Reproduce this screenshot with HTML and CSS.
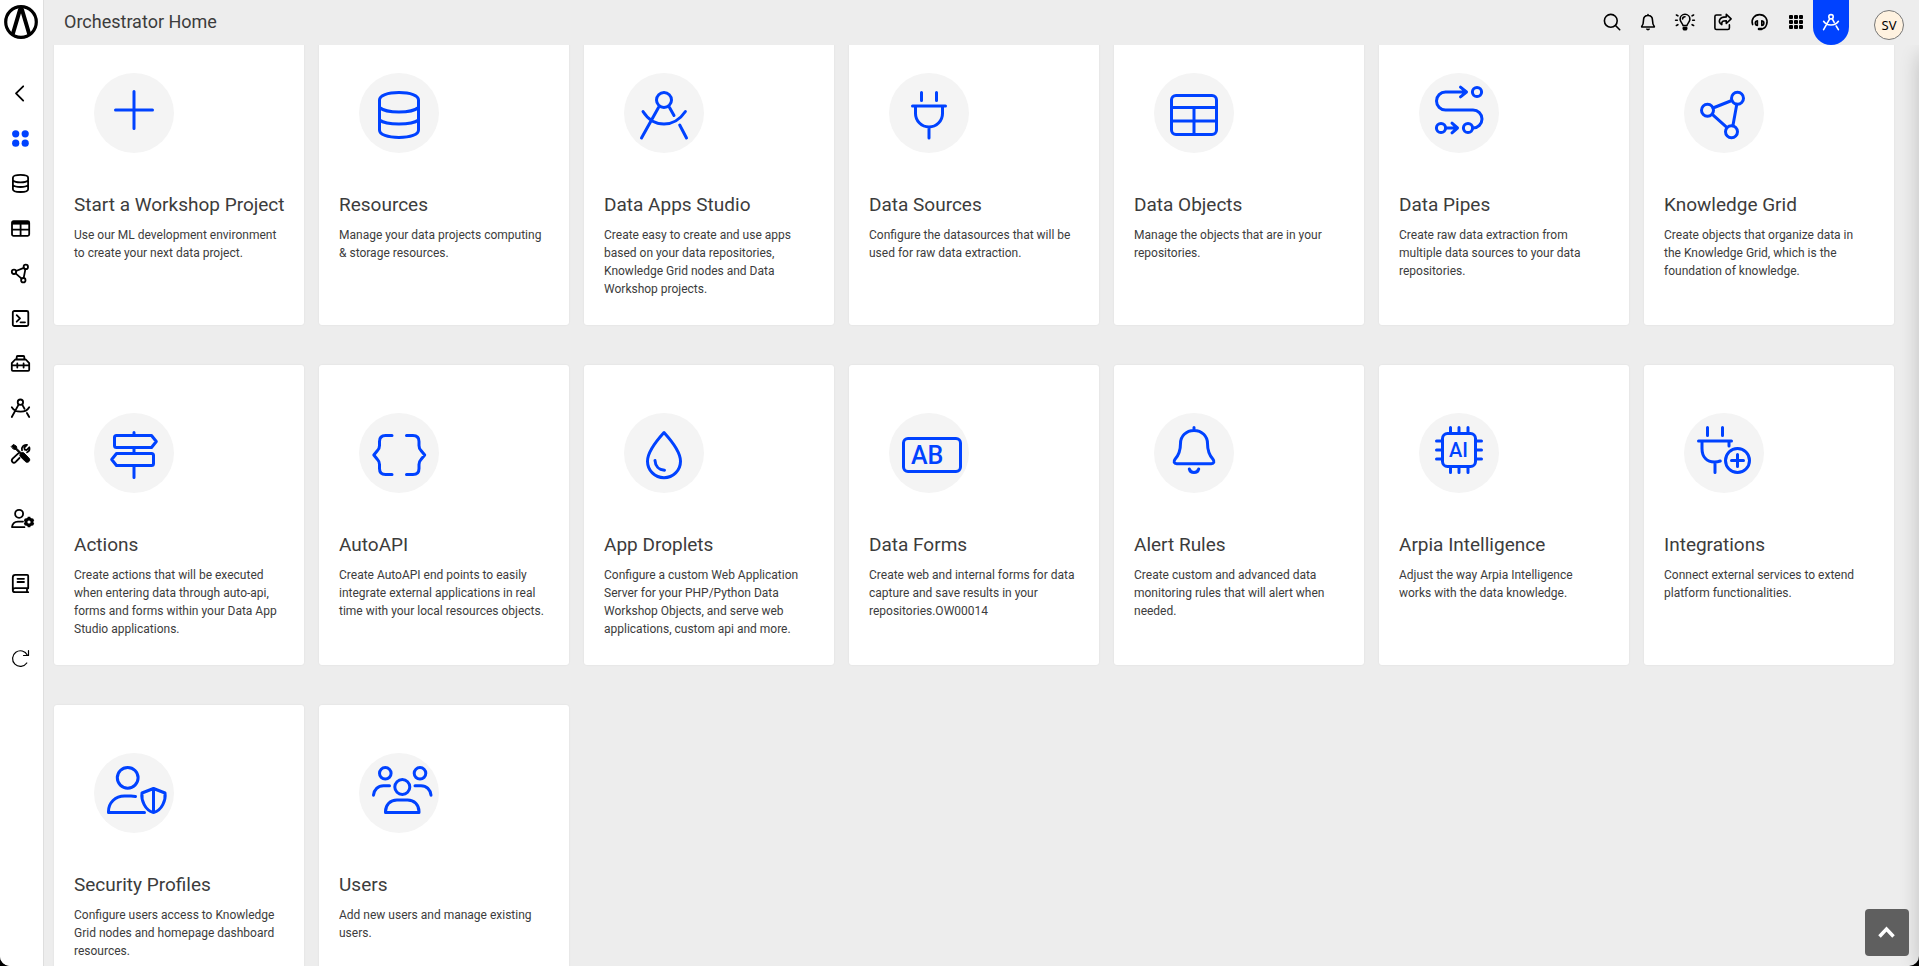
FILE: index.html
```html
<!DOCTYPE html>
<html lang="en">
<head>
<meta charset="utf-8">
<meta name="viewport" content="width=device-width, initial-scale=1">
<title>Orchestrator Home</title>
<link rel="stylesheet" href="styles.css">
</head>
<body>
<div class="app">
  <aside class="sidebar">
    <a class="logo" href="#" aria-label="Arpia">
      <svg viewBox="0 0 34 34"><circle cx="17" cy="17" r="15.300" fill="none" stroke="#000" stroke-width="3.200"/><path d="M8.800 29 L16.200 4 H17.800 L25.200 29" fill="none" stroke="#000" stroke-width="4" stroke-linejoin="bevel"/></svg>
    </a>
    <nav class="side-nav" aria-label="Main">
      <a href="#" aria-label="Back"><svg class="icon" viewBox="0 0 25 25"><path d="M15.200 5.300 8 12.400l7.200 7.200"/></svg></a>
      <a href="#" aria-label="Home"><svg class="icon icon-active" viewBox="0 0 25 25"><circle cx="7.700" cy="7.800" r="3.600"/><circle cx="17.200" cy="7.800" r="3.600"/><circle cx="7.700" cy="17.200" r="3.600"/><circle cx="17.200" cy="17.200" r="3.600"/></svg></a>
      <a href="#" aria-label="Resources"><svg class="icon" viewBox="0 0 25 25"><path d="M4.900 6.700C4.900 5 8 3.900 12.500 3.900s7.600 1.100 7.600 2.800v11.500c0 1.700-3.100 2.800-7.600 2.800s-7.600-1.100-7.600-2.800zM4.900 9.300c1.400 1.500 4.300 2 7.600 2s6.200-.5 7.600-2M4.900 14c1.400 1.500 4.300 2 7.600 2s6.200-.5 7.600-2"/></svg></a>
      <a href="#" aria-label="Data Objects"><svg class="icon" viewBox="0 0 25 25"><rect x="4" y="5.200" width="17.200" height="14.600" rx="1.500"/><path d="M4 6.800h17.200" stroke-width="3.600" stroke-linecap="butt"/><path d="M4 13.600h17.200M12.600 8v11.500" stroke-linecap="butt"/></svg></a>
      <a href="#" aria-label="Knowledge Grid"><svg class="icon" viewBox="0 0 25 25"><circle cx="6" cy="10.800" r="2.200"/><circle cx="17.800" cy="5.900" r="2.200"/><circle cx="15.300" cy="19.200" r="2.200"/><path d="m8 10 7.800-3.200M17.400 8.200l-1.700 8.700M7.600 12.400l6 5.200"/></svg></a>
      <a href="#" aria-label="Console"><svg class="icon" viewBox="0 0 25 25"><rect x="4.800" y="5" width="15.500" height="15" rx="1.500"/><path d="m8.700 9.200 3.300 3.200-3.300 3.300M12.500 16.300h4.500"/></svg></a>
      <a href="#" aria-label="Toolbox"><svg class="icon" viewBox="0 0 25 25"><path d="M8.700 8.300V5.900c0-.6.300-.9.900-.9h5.800c.6 0 .9.300.9.900v2.400M3.800 18.800v-6.600l3.400-3.700h10.600l3.400 3.700v6.600c0 .7-.4 1.100-1.100 1.100H4.900c-.7 0-1.100-.4-1.100-1.100zM3.800 14.400h17.400M9.300 12.500v4M15.600 12.500v4"/></svg></a>
      <a href="#" aria-label="Data Apps Studio"><svg class="icon" viewBox="0 0 25 25"><circle cx="12.400" cy="6.200" r="2.700"/><path d="M10.600 8.600 3.800 21M14.200 8.600l2.300 4.200M18.900 17l2.300 4M3.800 11.200c3.400 5.600 13.900 6.200 17.400 0"/></svg></a>
      <a href="#" aria-label="Tools"><svg class="icon" viewBox="0 0 25 25"><path d="M3.500 5.300 5.400 3.400l3 1.800.5 2.300 4.300 4.300 1.200-.3c.5-.1 1 0 1.400.4l5 5c1.400 1.400 1 2.800.2 3.600-1 1-2.400 1.200-3.700 0l-5-5c-.4-.4-.5-.9-.4-1.400l.3-1.200L7.900 8.600l-2.300-.5z" fill="currentColor" stroke-width="1"/><path d="M10.300 12.300 4.600 17.700c-2.200 2.600.8 5.300 3.100 3.100l3.800-3.800M14 9.300c-.9-3 1.600-6 5-5.400l-2.700 2.700.4 2 2 .4 2.600-2.700c.6 2.200-.4 4.200-2.200 5"/></svg></a>
      <a class="spaced" href="#" aria-label="User settings"><svg class="icon" viewBox="0 0 25 25"><circle cx="11.100" cy="7.800" r="4"/><path d="M15 15.600H10c-3.400.1-5.700 2.300-6 5.600h12.400"/><circle cx="21" cy="16" r="3.100" stroke-width="3"/><path d="M21 10.700v2M21 19.300v2M16.400 13.400l1.700 1M23.900 17.600l1.700 1M16.400 18.600l1.700-1M23.900 14.400l1.700-1" stroke-width="2.600" stroke-linecap="butt"/></svg></a>
      <a class="spaced" href="#" aria-label="Documentation"><svg class="icon" viewBox="0 0 25 25"><path d="M20.200 17.300V4.900c0-.6-.4-1-1-1H7.300c-1.500 0-2.500 1-2.500 2.500v12.500c0 1.300 1 2.300 2.300 2.300h13.100M4.900 18.800c.2-1 1-1.600 2.200-1.600h13.100M19 17.500v3.500M9.500 7.800H16M9.500 11H16"/></svg></a>
      <a class="spaced-lg" href="#" aria-label="Refresh"><svg class="icon icon-thin" viewBox="0 0 25 25"><path d="M18.800 17a7.800 7.800 0 1 1 .6-7.800M20.500 4.500v5h-5"/></svg></a>
    </nav>
  </aside>

  <div class="page">
    <header class="topbar">
      <h1 class="page-title">Orchestrator Home</h1>
      <div class="actions">
        <button type="button" aria-label="Search"><svg class="icon" viewBox="0 0 24 24"><circle cx="11.800" cy="10.800" r="6.400"/><path d="m16.500 15.500 4.200 4.200"/></svg></button>
        <button type="button" aria-label="Notifications"><svg class="icon" viewBox="0 0 24 24"><path d="M12 4.500v1M12 5.500c-3 0-4.500 2-4.500 4.700 0 3.600-.8 5-1.800 6.200v.6h12.600v-.6c-1-1.200-1.800-2.600-1.800-6.200 0-2.700-1.500-4.700-4.500-4.700z"/><path d="M10.900 19.200c.3.500 1.900.5 2.200 0"/></svg></button>
        <button type="button" aria-label="Tips"><svg class="icon" viewBox="0 0 24 24"><path d="M10 15.600c0-2-2.900-3.300-2.900-6.400a4.900 4.900 0 0 1 9.800 0c0 3.100-2.900 4.400-2.900 6.400zM12 6.700c-1.300 0-2.400 1-2.400 2.300"/><path d="M10.300 17.800h3.400v1l-.7 1h-2l-.7-1z" fill="currentColor"/><path d="M2.600 10.200h1.700M19.700 10.200h1.700M3.400 5l1.500.8M20.600 5l-1.500.8M3.400 15.500l1.500-.8M20.600 15.500l-1.500-.8"/></svg></button>
        <button type="button" aria-label="Share"><svg class="icon" viewBox="0 0 24 24"><path d="M11 5H6.500c-1 0-1.600.6-1.600 1.600v11.300c0 1 .6 1.600 1.600 1.600h11.300c1 0 1.600-.6 1.600-1.600v-3M16.300 4.200l4.800 4.700-4.800 4.600v-2.800c-3.300-.1-5 .8-4.500 4-4.500-2.900-2.500-7.800 4.500-7.800z"/></svg></button>
        <button type="button" aria-label="Support"><svg class="icon" viewBox="0 0 24 24"><path d="M5.600 14.600c-1.800-5.200 1.700-10 7-10 5.400 0 8.700 4.800 7 10-.9 2.700-2.600 4.300-5.200 4.400"/><path d="M10.400 10.700v4.800c-2.500 0-3-4.300 0-4.800zM14.800 10.700v4.800c2.500 0 3-4.300 0-4.800z"/><path d="M12 19h2.400" stroke-width="2.600"/></svg></button>
        <button type="button" aria-label="Apps"><svg class="icon icon-fill" viewBox="0 0 24 24"><rect x="5" y="5" width="4" height="4" rx="1"/><rect x="10" y="5" width="4" height="4" rx="1"/><rect x="15" y="5" width="4" height="4" rx="1"/><rect x="5" y="10" width="4" height="4" rx="1"/><rect x="10" y="10" width="4" height="4" rx="1"/><rect x="15" y="10" width="4" height="4" rx="1"/><rect x="5" y="15" width="4" height="4" rx="1"/><rect x="10" y="15" width="4" height="4" rx="1"/><rect x="15" y="15" width="4" height="4" rx="1"/></svg></button>
      </div>
      <button class="studio-tab" type="button" aria-label="Studio"><svg class="icon" viewBox="0 0 24 24"><circle cx="12" cy="5.800" r="2.200"/><path d="M10.700 7.800 4.600 18.700M13.300 7.800l1.900 3.600M17.200 15l2.200 3.700M4.600 10.300c3.200 5 11.600 5 14.800 0"/></svg></button>
      <button class="avatar" type="button">SV</button>
    </header>

    <main class="cards">
      <a class="card" href="#">
        <span class="badge"><svg viewBox="0 0 80 80"><path d="M40 18.500v37M21.500 37h37"/></svg></span>
        <h2>Start a Workshop Project</h2>
        <p>Use our ML development environment<br>to create your next data project.</p>
      </a>
      <a class="card" href="#">
        <span class="badge"><svg viewBox="0 0 80 80"><path d="M20.500 27c0-4.500 8-7.500 19.500-7.500s19.500 3 19.500 7.500v30c0 4.500-8 7.500-19.500 7.500s-19.500-3-19.500-7.500zM20.500 34.500C24 37.500 31 39 40 39s16-1.500 19.500-4.500M20.500 47c3.500 2.700 10.500 4 19.500 4s16-1.300 19.500-4"/></svg></span>
        <h2>Resources</h2>
        <p>Manage your data projects computing<br>&amp; storage resources.</p>
      </a>
      <a class="card" href="#">
        <span class="badge"><svg viewBox="0 0 80 80"><circle cx="40" cy="27" r="7.500"/><path d="M34.500 34.500 17.500 65M45.500 34.500l4.500 8M55.700 52l6.800 13M19 38.500C24 46.500 31.500 51 40 51s16-4.500 21.400-12.500"/></svg></span>
        <h2>Data Apps Studio</h2>
        <p>Create easy to create and use apps<br>based on your data repositories,<br>Knowledge Grid nodes and Data<br>Workshop projects.</p>
      </a>
      <a class="card" href="#">
        <span class="badge"><svg viewBox="0 0 80 80"><path d="M32.500 19.500v8M47.500 19.500v8M23.500 33h33M26.500 33v7.500a13.500 13.500 0 0 0 27 0V33M40 54v11"/></svg></span>
        <h2>Data Sources</h2>
        <p>Configure the datasources that will be<br>used for raw data extraction.</p>
      </a>
      <a class="card" href="#">
        <span class="badge"><svg viewBox="0 0 80 80"><rect x="17.500" y="22.500" width="45" height="39" rx="4.500"/><path d="M17.500 34.500h45M17.500 48h45M40 34.500v27"/></svg></span>
        <h2>Data Objects</h2>
        <p>Manage the objects that are in your<br>repositories.</p>
      </a>
      <a class="card" href="#">
        <span class="badge"><svg viewBox="0 0 80 80"><circle cx="58" cy="19" r="4.600"/><circle cx="22" cy="55" r="4.600"/><circle cx="49" cy="55" r="4.600"/><path d="M47.500 19h-21a9 9 0 0 0 0 18h27.500a9 9 0 0 1 0 18M41.500 14.200l6 4.800-6 4.800M27 55h11.500M33 50.200l5.500 4.800-5.500 4.800"/></svg></span>
        <h2>Data Pipes</h2>
        <p>Create raw data extraction from<br>multiple data sources to your data<br>repositories.</p>
      </a>
      <a class="card" href="#">
        <span class="badge"><svg viewBox="0 0 80 80"><circle cx="23.500" cy="37.300" r="6"/><circle cx="53.500" cy="25.200" r="6"/><circle cx="47.500" cy="58.700" r="6"/><path d="m29 35 18.800-7.500M52.800 31.200l-3.900 21.500M28.300 41.400l14.500 13"/></svg></span>
        <h2>Knowledge Grid</h2>
        <p>Create objects that organize data in<br>the Knowledge Grid, which is the<br>foundation of knowledge.</p>
      </a>
      <a class="card" href="#">
        <span class="badge"><svg viewBox="0 0 80 80"><path d="M40 19.500v3M40 34.500v6M40 52.500V64.500M22.500 22.500h35l4.800 6-4.800 6h-35c-1.200 0-2-.8-2-2v-8c0-1.200.8-2 2-2zM57.500 40.500h-35l-4.800 6 4.800 6h35c1.200 0 2-.8 2-2v-8c0-1.200-.8-2-2-2z"/></svg></span>
        <h2>Actions</h2>
        <p>Create actions that will be executed<br>when entering data through auto-api,<br>forms and forms within your Data App<br>Studio applications.</p>
      </a>
      <a class="card" href="#">
        <span class="badge"><svg viewBox="0 0 80 80"><path d="M33 22.500h-6.500c-4 0-6 2-6 6v4c0 2-.5 3.500-2 5l-3.700 4.500 3.700 4.500c1.500 1.500 2 3 2 5v4c0 4 2 6 6 6H33M47.500 22.500H54c4 0 6 2 6 6v4c0 2 .5 3.500 2 5l3.700 4.500-3.700 4.500c-1.500 1.500-2 3-2 5v4c0 4-2 6-6 6h-6.500"/></svg></span>
        <h2>AutoAPI</h2>
        <p>Create AutoAPI end points to easily<br>integrate external applications in real<br>time with your local resources objects.</p>
      </a>
      <a class="card" href="#">
        <span class="badge"><svg viewBox="0 0 80 80"><path d="M40 19.500C35 25 23.500 37.500 23.500 48.200a16.500 16.500 0 0 0 33 0C56.500 37.500 45 25 40 19.500zM31 47.500c.3 5.500 3.800 9.400 9.500 9.700"/></svg></span>
        <h2>App Droplets</h2>
        <p>Configure a custom Web Application<br>Server for your PHP/Python Data<br>Workshop Objects, and serve web<br>applications, custom api and more.</p>
      </a>
      <a class="card" href="#">
        <span class="badge"><svg viewBox="0 0 80 80"><rect x="14.500" y="25.500" width="57" height="33" rx="4.500"/><text x="22" y="51" font-size="25">AB</text></svg></span>
        <h2>Data Forms</h2>
        <p>Create web and internal forms for data<br>capture and save results in your<br>repositories.OW00014</p>
      </a>
      <a class="card" href="#">
        <span class="badge"><svg viewBox="0 0 80 80"><path d="M40 14.500v3M40 17.500c-8 0-13.500 5.800-13.500 13 0 7-1.300 11-5.300 15.500-2 2.400-1.200 4.700 1.500 4.700h34.600c2.700 0 3.500-2.300 1.500-4.700-4-4.500-5.300-8.500-5.300-15.500 0-7.200-5.500-13-13.500-13zM35.300 56c1.300 4.700 8.100 4.700 9.400 0"/></svg></span>
        <h2>Alert Rules</h2>
        <p>Create custom and advanced data<br>monitoring rules that will alert when<br>needed.</p>
      </a>
      <a class="card" href="#">
        <span class="badge"><svg viewBox="0 0 80 80"><rect x="23.500" y="20.500" width="33" height="33" rx="5"/><path d="M31.500 14.500v6M40 14.500v6M49 14.500v6M31.500 53.500v6M40 53.500v6M49 53.500v6M17.500 28h6M17.500 37h6M17.500 46h6M56.500 28h6M56.500 37h6M56.500 46h6"/><text x="30" y="44" font-size="20">AI</text></svg></span>
        <h2>Arpia Intelligence</h2>
        <p>Adjust the way Arpia Intelligence<br>works with the data knowledge.</p>
      </a>
      <a class="card" href="#">
        <span class="badge"><svg viewBox="0 0 80 80"><path d="M23.500 14.500v8M38.500 14.500v8M14.500 28h33M18 28v7.500c0 8.800 5 13.300 12.500 13.500 2 0 4-.3 5.800-1M45 28v5M31 49v10.500M53.500 41.500v12M47.500 47.500h12"/><circle cx="53.500" cy="47.500" r="12"/></svg></span>
        <h2>Integrations</h2>
        <p>Connect external services to extend<br>platform functionalities.</p>
      </a>
      <a class="card" href="#">
        <span class="badge"><svg viewBox="0 0 80 80"><circle cx="33.700" cy="24.800" r="10.400"/><path d="M41.500 43.500c-1.500-.3-3-.5-4.500-.5h-6.500c-9.300 0-16 6.700-16 15.500v1h36M59.500 35.500l11.500 4.500c1 7-3 17.500-11.500 19.500-8.500-2-12.500-12.500-11.500-19.500zM59.500 35.500v24"/></svg></span>
        <h2>Security Profiles</h2>
        <p>Configure users access to Knowledge<br>Grid nodes and homepage dashboard<br>resources.</p>
      </a>
      <a class="card" href="#">
        <span class="badge"><svg viewBox="0 0 80 80"><circle cx="26.300" cy="20.300" r="5.800"/><circle cx="61" cy="20.300" r="5.800"/><circle cx="43.300" cy="34" r="7.500"/><path d="M30.500 32.700h-6c-5.500 0-9.500 4-10 9.500M56 32.700h6c5.500 0 9.500 4 10 9.500M26.500 59.500v-1c0-6.500 4.700-11.500 11.500-11.500h10.500c6.800 0 11.500 5 11.500 11.500v1z"/></svg></span>
        <h2>Users</h2>
        <p>Add new users and manage existing<br>users.</p>
      </a>
    </main>
  </div>

  <div class="drawer-edge"></div>
  <button class="to-top" type="button" aria-label="Back to top"><svg viewBox="0 0 44 47"><path d="m14.500 27.500 7-7.500 7 7.500" fill="none" stroke="#fff" stroke-width="3.500"/></svg></button>
</div>
</body>
</html>
```

FILE: styles.css
```css
* {
  box-sizing: border-box;
}

html,
body {
  height: 100%;
  margin: 0;
  overflow: hidden;
  background: #000;
}

body {
  font-family: Roboto, "Liberation Sans", sans-serif;
  color: #3c3c3c;
}

button {
  display: grid;
  place-items: center;
  padding: 0;
  border: 0;
  background: none;
  color: inherit;
  font: inherit;
  cursor: pointer;
}

a {
  color: inherit;
  text-decoration: none;
}

.app {
  position: relative;
  display: flex;
  height: 100vh;
  overflow: hidden;
  border-radius: 0 0 10px 10px;
  background: #ededed;
}

.sidebar {
  flex: none;
  width: 44px;
  border-right: 1px solid #dedede;
  background: #fff;
}

.logo {
  display: block;
  height: 45px;
  padding: 5px 0 0 4px;
}

.logo svg {
  display: block;
  width: 34px;
  height: 34px;
}

.side-nav {
  display: flex;
  flex-direction: column;
  padding-top: 26px;
}

.side-nav a {
  display: flex;
  align-items: center;
  height: 45px;
  padding-left: 8px;
}

.side-nav .spaced {
  margin-top: 20px;
}

.side-nav .spaced-lg {
  margin-top: 30px;
}

.icon {
  display: block;
  width: 24px;
  height: 24px;
  overflow: visible;
  color: #000;
  fill: none;
  stroke: currentColor;
  stroke-width: 1.6;
  stroke-linecap: round;
  stroke-linejoin: round;
}

.side-nav .icon {
  width: 25px;
  height: 25px;
  stroke-width: 1.8;
}

.side-nav .icon-active {
  color: #0042ff;
  fill: currentColor;
  stroke: none;
}

.side-nav .icon-thin {
  stroke-width: 1.2;
}

.icon-fill {
  fill: currentColor;
  stroke: none;
}

.page {
  flex: 1;
  min-width: 0;
}

.topbar {
  position: relative;
  z-index: 1;
  display: flex;
  align-items: flex-start;
  height: 45px;
  padding: 0 15px 0 20px;
  background: #ededed;
}

.page-title {
  flex: 1;
  margin: 0;
  font-size: 18px;
  font-weight: 400;
  line-height: 43px;
}

.actions {
  display: flex;
  gap: 13px;
  padding: 10px 5px 0 0;
}

.studio-tab {
  width: 36px;
  height: 45px;
  border-radius: 0 0 18px 18px;
  background: #0042ff;
}

.studio-tab .icon {
  color: #fff;
}

.avatar {
  width: 30px;
  height: 30px;
  margin: 10px 0 0 25px;
  border: 1px solid #777;
  border-radius: 50%;
  background: #fff2e0;
  color: #000;
  font-family: "Noto Sans", sans-serif;
  font-size: 13px;
}

.cards {
  display: grid;
  grid-template-columns: repeat(7, minmax(0, 1fr));
  grid-auto-rows: minmax(300px, auto);
  gap: 40px 15px;
  margin-top: -20px;
  padding: 0 25px 0 10px;
}

.card {
  padding: 48px 20px 20px;
  border-radius: 3px;
  background: #fff;
  box-shadow: 0 0 2px rgba(0, 0, 0, 0.08);
  white-space: nowrap;
}

.badge {
  display: block;
  width: 80px;
  height: 80px;
  margin-left: 20px;
  border-radius: 50%;
  background: #f4f4f4;
}

.badge svg {
  display: block;
  overflow: visible;
  fill: none;
  stroke: #0042ff;
  stroke-width: 3;
  stroke-linecap: round;
  stroke-linejoin: round;
}

.badge text {
  fill: #0042ff;
  stroke: none;
  font-weight: 500;
}

.card h2 {
  margin: 39px 0 0;
  font-size: 19px;
  font-weight: 400;
  line-height: 26px;
}

.card p {
  margin: 8px 0 0;
  font-size: 12px;
  line-height: 18px;
}

.drawer-edge {
  position: absolute;
  top: 55px;
  bottom: 0;
  left: 100%;
  width: 20px;
  box-shadow: 0 0 20px rgba(0, 0, 0, 0.2);
}

.to-top {
  position: absolute;
  right: 10px;
  bottom: 10px;
  width: 44px;
  height: 47px;
  border-radius: 4px;
  background: #5f5f5f;
}

.to-top svg {
  width: 44px;
  height: 47px;
}
```
